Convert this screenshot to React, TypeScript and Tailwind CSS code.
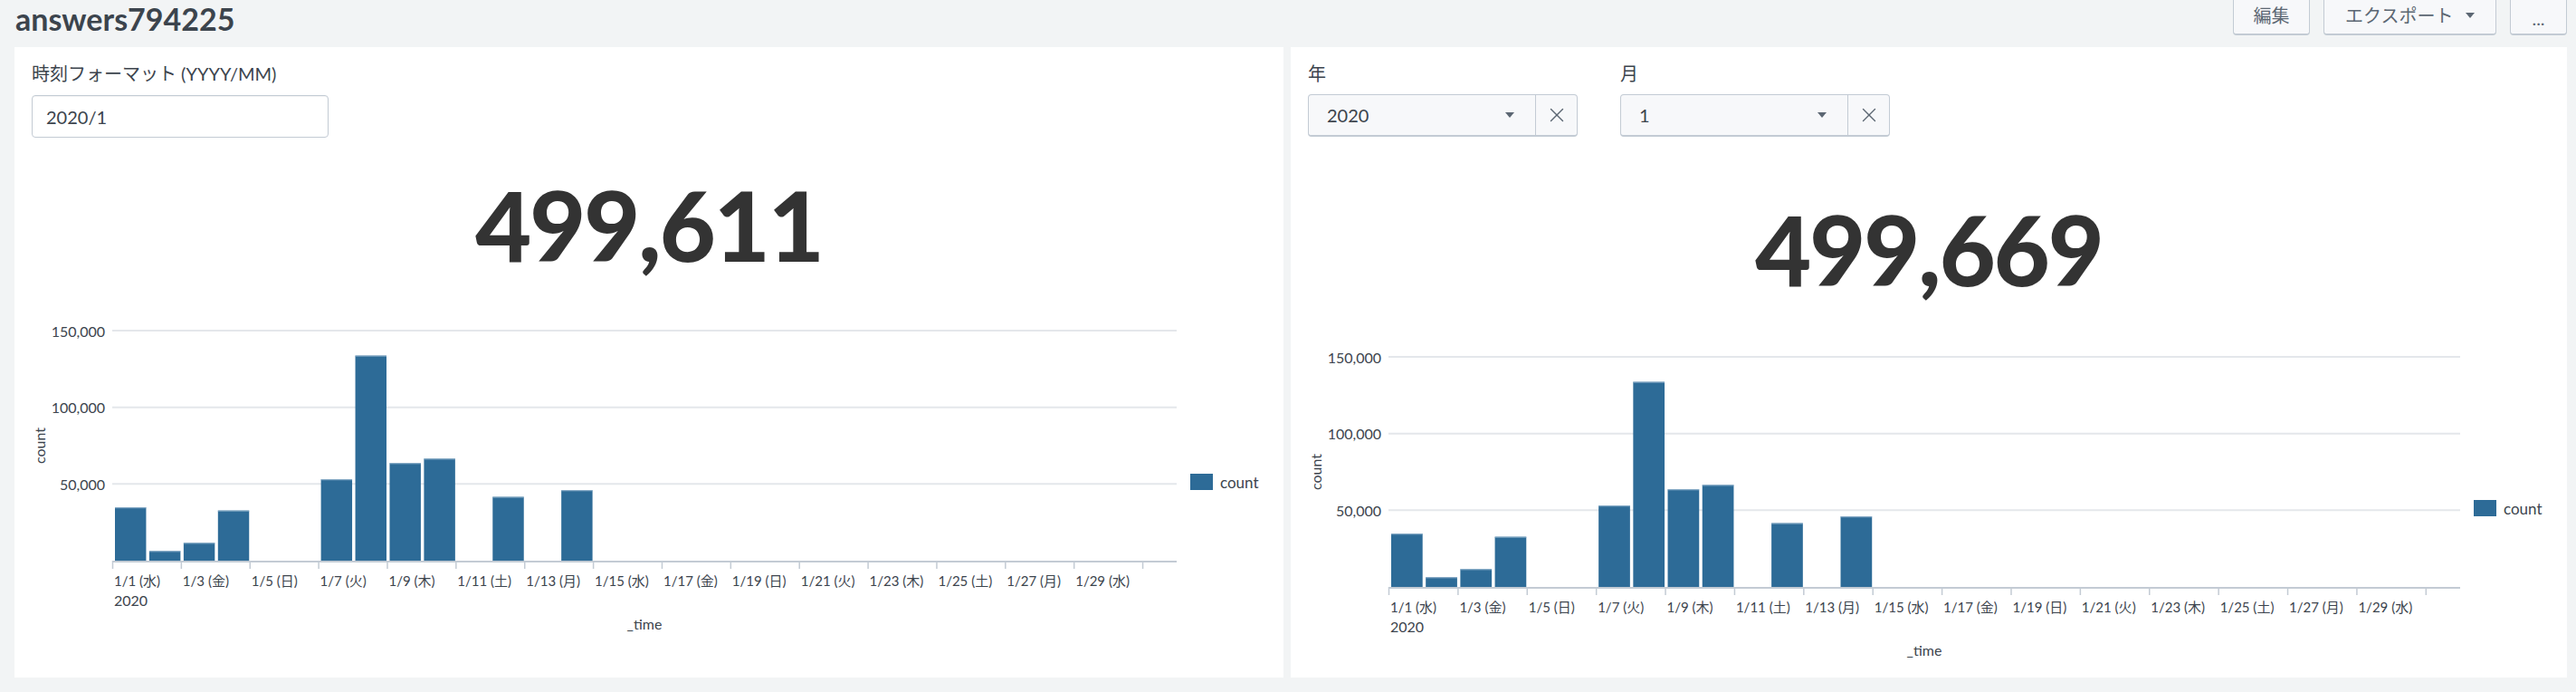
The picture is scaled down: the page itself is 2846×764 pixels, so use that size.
import React from "react";
import { X } from "lucide-react";

// daily counts in thousands, 1/1 .. 1/14
const counts = [34.7, 6.3, 11.6, 32.7, 0, 0, 53, 133.7, 63.6, 66.5, 0, 41.6, 0, 45.9];
const weekdays = ["水", "木", "金", "土", "日", "月", "火"];

const Chart: React.FC<{ width: number }> = ({ width }) => {
  const x0 = 108;
  const x1 = width - 118;
  const dayW = (x1 - x0) / 31;
  const base = 277;
  const scale = 254 / 150;

  return (
    <svg width={width} height={360} className="block">
      {[150, 100, 50].map((v) => (
        <g key={v}>
          <line x1={x0} x2={x1} y1={base - v * scale} y2={base - v * scale} stroke="#e4e7eb" strokeWidth={2} />
          <text x={100} y={base - v * scale} textAnchor="end" dominantBaseline="central" fontSize={16} fill="#3c444d">
            {v},000
          </text>
        </g>
      ))}

      {counts.map((c, i) =>
        c > 0 ? (
          <g key={i}>
            <rect x={x0 + i * dayW + 3} y={base - c * scale} width={dayW - 3.5} height={c * scale} fill="#2d6b97" />
            <line
              x1={x0 + i * dayW + 3}
              x2={x0 + i * dayW + dayW - 0.5}
              y1={base - c * scale + 0.5}
              y2={base - c * scale + 0.5}
              stroke="#8fb1cb"
              strokeWidth={1}
            />
          </g>
        ) : null
      )}

      <line x1={x0} x2={x1} y1={base + 1} y2={base + 1} stroke="#c3cbd4" strokeWidth={2} />
      {Array.from({ length: 16 }).map((_, i) => (
        <line key={i} x1={x0 + i * 2 * dayW + 0.5} x2={x0 + i * 2 * dayW + 0.5} y1={base} y2={base + 9} stroke="#c3cbd4" strokeWidth={1.5} />
      ))}
      {Array.from({ length: 15 }).map((_, i) => {
        const d = i * 2 + 1;
        return (
          <text key={i} x={x0 + i * 2 * dayW + 2} y={base + 22} dominantBaseline="central" fontSize={15} fill="#3c444d">
            1/{d} ({weekdays[(d - 1) % 7]})
          </text>
        );
      })}
      <text x={x0 + 2} y={base + 43} dominantBaseline="central" fontSize={16} fill="#3c444d">
        2020
      </text>
      <text x={(x0 + x1) / 2} y={base + 69} textAnchor="middle" dominantBaseline="central" fontSize={16} fill="#3c444d">
        _time
      </text>
      <text
        x={27}
        y={150}
        textAnchor="middle"
        dominantBaseline="central"
        fontSize={16}
        fill="#3c444d"
        transform="rotate(-90 27 150)"
      >
        count
      </text>

      <rect x={x1 + 15} y={181} width={25} height={18} fill="#2d6b97" />
      <text x={x1 + 48} y={190} dominantBaseline="central" fontSize={17} fill="#3c444d">
        count
      </text>
    </svg>
  );
};

const Caret = () => <span className="inline-block w-0 h-0 border-l-[5px] border-r-[5px] border-t-[6px] border-l-transparent border-r-transparent border-t-[#5c6773]" />;

const Select: React.FC<{ value: string }> = ({ value }) => (
  <div className="flex w-[298px] h-[47px] rounded-[4px] border border-[#c3cbd4] border-b-2 bg-[#f7f8fa]">
    <div className="flex flex-1 items-center justify-between pl-[20px] pr-[23px] text-[20px] text-[#3c444d]">
      <span>{value}</span>
      <Caret />
    </div>
    <div className="flex w-[46px] items-center justify-center border-l border-[#c3cbd4] text-[#5c6773]">
      <X className="h-[26px] w-[26px]" strokeWidth={1.3} />
    </div>
  </div>
);

const BigNumber: React.FC<{ value: string }> = ({ value }) => (
  <div className="text-center text-[107px] leading-none font-black text-[#333333] tracking-[-2px]">{value}</div>
);

export default function App() {
  return (
    <div className="w-full h-[764px] overflow-hidden bg-[#f2f4f5] font-['Lato','Noto_Sans_CJK_JP',sans-serif] text-[#3c444d]">
      <div className="flex h-[52px] justify-between pl-[17px] pr-[10px]">
        <h1 className="pt-[4px] text-[34px] leading-[34px] font-bold text-[#3c444d]">answers794225</h1>
        <div className="flex gap-[15px] -mt-[9px]">
          <button className="flex h-[48px] w-[85px] items-center justify-center rounded-[4px] border border-[#c3cbd4] border-b-2 bg-[#f7f8fa] pt-[4px] text-[20px] text-[#5c6773]">
            編集
          </button>
          <button className="flex h-[48px] w-[191px] items-center gap-[14px] rounded-[4px] border border-[#c3cbd4] border-b-2 bg-[#f7f8fa] pl-[23px] pt-[4px] text-[20px] text-[#5c6773]">
            <span>エクスポート</span>
            <Caret />
          </button>
          <button className="flex h-[48px] w-[63px] items-center justify-center rounded-[4px] border border-[#c3cbd4] border-b-2 bg-[#f7f8fa] pt-[10px] text-[20px] text-[#5c6773]">
            ...
          </button>
        </div>
      </div>

      <div className="flex gap-[8px] pl-[16px] pr-[10px]">
        <div className="flex h-[696px] w-[1402px] flex-col bg-white">
          <div className="pl-[19px] pt-[17px]">
            <div className="text-[20px] leading-[24px]">時刻フォーマット (YYYY/MM)</div>
            <div className="mt-[12px] flex h-[47px] w-[328px] items-center rounded-[4px] border border-[#c3cbd4] px-[15px] text-[20px] shadow-[inset_0_1px_1px_rgba(0,0,0,0.05)]">
              2020/1
            </div>
          </div>
          <div className="mt-[42px]">
            <BigNumber value="499,611" />
          </div>
          <div className="mt-[41px]">
            <Chart width={1402} />
          </div>
        </div>

        <div className="flex h-[696px] flex-1 flex-col bg-white">
          <div className="flex gap-[47px] pl-[19px] pt-[17px]">
            <div>
              <div className="text-[20px] leading-[24px]">年</div>
              <div className="mt-[11px]">
                <Select value="2020" />
              </div>
            </div>
            <div>
              <div className="text-[20px] leading-[24px]">月</div>
              <div className="mt-[11px]">
                <Select value="1" />
              </div>
            </div>
          </div>
          <div className="mt-[70px]">
            <BigNumber value="499,669" />
          </div>
          <div className="mt-[43px]">
            <Chart width={1410} />
          </div>
        </div>
      </div>
    </div>
  );
}
